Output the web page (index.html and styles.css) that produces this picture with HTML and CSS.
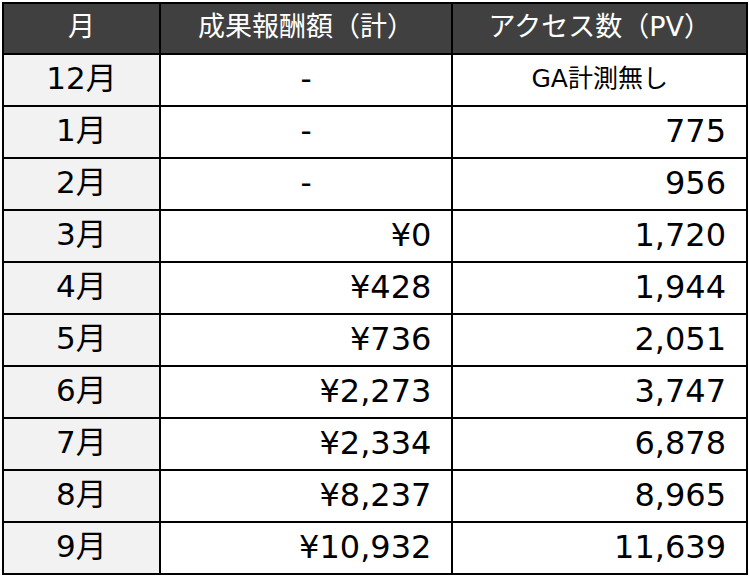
FILE: index.html
```html
<!DOCTYPE html>
<html lang="ja">
<head>
<meta charset="utf-8">
<link rel="stylesheet" href="styles.css">
</head>
<body>
<div class="wrap">
<table class="report">
  <thead>
    <tr>
      <th class="c-month">月</th>
      <th class="c-reward">成果報酬額（計）</th>
      <th class="c-pv">アクセス数（PV）</th>
    </tr>
  </thead>
  <tbody>
    <tr><td class="month">12月</td><td class="center">-</td><td class="center note">GA計測無し</td></tr>
    <tr><td class="month">1月</td><td class="center">-</td><td class="num">775</td></tr>
    <tr><td class="month">2月</td><td class="center">-</td><td class="num">956</td></tr>
    <tr><td class="month">3月</td><td class="num">¥0</td><td class="num">1,720</td></tr>
    <tr><td class="month">4月</td><td class="num">¥428</td><td class="num">1,944</td></tr>
    <tr><td class="month">5月</td><td class="num">¥736</td><td class="num">2,051</td></tr>
    <tr><td class="month">6月</td><td class="num">¥2,273</td><td class="num">3,747</td></tr>
    <tr><td class="month">7月</td><td class="num">¥2,334</td><td class="num">6,878</td></tr>
    <tr><td class="month">8月</td><td class="num">¥8,237</td><td class="num">8,965</td></tr>
    <tr><td class="month">9月</td><td class="num">¥10,932</td><td class="num">11,639</td></tr>
  </tbody>
</table>
</div>
</body>
</html>
```
FILE: styles.css
```css
html, body {
  margin: 0;
  padding: 0;
  background: #ffffff;
}
.wrap {
  padding: 2px 0 0 2px;
}
.report {
  border-collapse: separate;
  border-spacing: 0;
  width: 746px;
  table-layout: fixed;
  border-top: 2px solid #000;
  border-left: 2px solid #000;
  font-family: "DejaVu Sans", "Noto Sans CJK JP", sans-serif;
  font-weight: 400;
  color: #000;
}
.report th,
.report td {
  border-right: 2px solid #000;
  border-bottom: 2px solid #000;
  padding: 0;
  line-height: 1;
  vertical-align: middle;
  box-sizing: border-box;
}
.report th {
  background: #404040;
  color: #ffffff;
  font-weight: 400;
  font-size: 27px;
  height: 51px;
  text-align: center;
  padding-bottom: 4px;
}
.c-month { width: 156px; }
.c-reward { width: 291px; }
.c-pv { width: 293px; }
.report td {
  font-size: 31px;
  height: 52px;
  padding-bottom: 3px;
}
.report td.month {
  background: #f2f2f2;
  text-align: center;
}
.report td.center {
  text-align: center;
}
.report td.num {
  text-align: right;
  padding-right: 20px;
  font-size: 32px;
}
.report td.note {
  font-size: 25px;
}
```
